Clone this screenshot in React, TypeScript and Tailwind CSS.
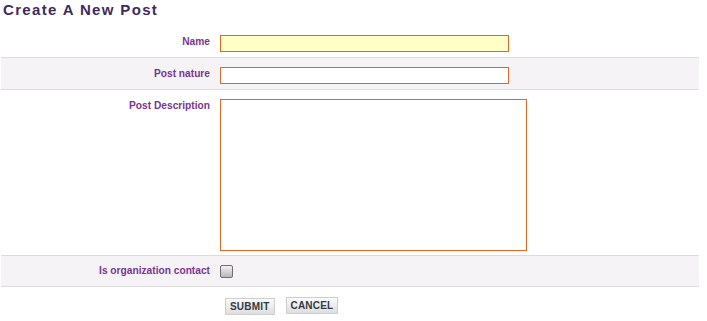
import React from 'react';

const labelCls =
  "w-[219px] shrink-0 pr-[10px] text-right text-[10.2px] font-bold leading-[13px] text-[#7a3592]";

export default function App() {
  return (
    <div className="w-[707px] h-[321px] bg-white font-['Liberation_Sans',Arial,sans-serif]">
      {/* Heading */}
      <div className="h-[26px] pl-[3px] pt-[1px]">
        <h1 className="text-[15px] font-bold tracking-[1.35px] leading-[18px] text-[#3f2a5f]">
          Create A New Post
        </h1>
      </div>

      <div className="ml-px w-[698px]">
        {/* Name */}
        <div className="flex pt-[9px] pb-[5px] border-b border-[#dcdcdc]">
          <label className={labelCls}>Name</label>
          <input className="h-[17px] w-[289px] border border-[#e8641f] bg-[#ffffc6] outline-none" />
        </div>

        {/* Post nature */}
        <div className="flex pt-[9px] pb-[5px] bg-[#f5f3f6] border-b border-[#dcdcdc]">
          <label className={labelCls}>Post nature</label>
          <input className="h-[17px] w-[289px] border border-[#e8641f] bg-white outline-none" />
        </div>

        {/* Post description */}
        <div className="flex pt-[9px] pb-[4px] border-b border-[#dcdcdc]">
          <label className={labelCls}>Post Description</label>
          <textarea className="h-[152px] w-[307px] resize-none border border-[#e8641f] bg-white outline-none" />
        </div>

        {/* Org contact */}
        <div className="flex items-center h-[31px] bg-[#f5f3f6] border-b border-[#dcdcdc]">
          <label className={labelCls + " -mt-[1px]"}>Is organization contact</label>
          <div className="h-[13px] w-[13px] rounded-[2px] border border-[#6f6f6f] bg-gradient-to-b from-[#f2f2f2] to-[#b8b8b8]" />
        </div>

        {/* Buttons */}
        <div className="flex items-start gap-[11px] pl-[224px] pt-[11px]">
          <button className="h-[17px] px-[4px] border border-[#cfcfcf] bg-gradient-to-b from-[#fafafa] to-[#dedede] text-[10px] font-bold leading-[16px] tracking-[0.2px] text-[#333a44]">
            SUBMIT
          </button>
          <button className="-mt-[1px] h-[17px] px-[4px] border border-[#cfcfcf] bg-gradient-to-b from-[#fafafa] to-[#dedede] text-[10px] font-bold leading-[13px] tracking-[0.2px] text-[#333a44]">
            CANCEL
          </button>
        </div>
      </div>
    </div>
  );
}
